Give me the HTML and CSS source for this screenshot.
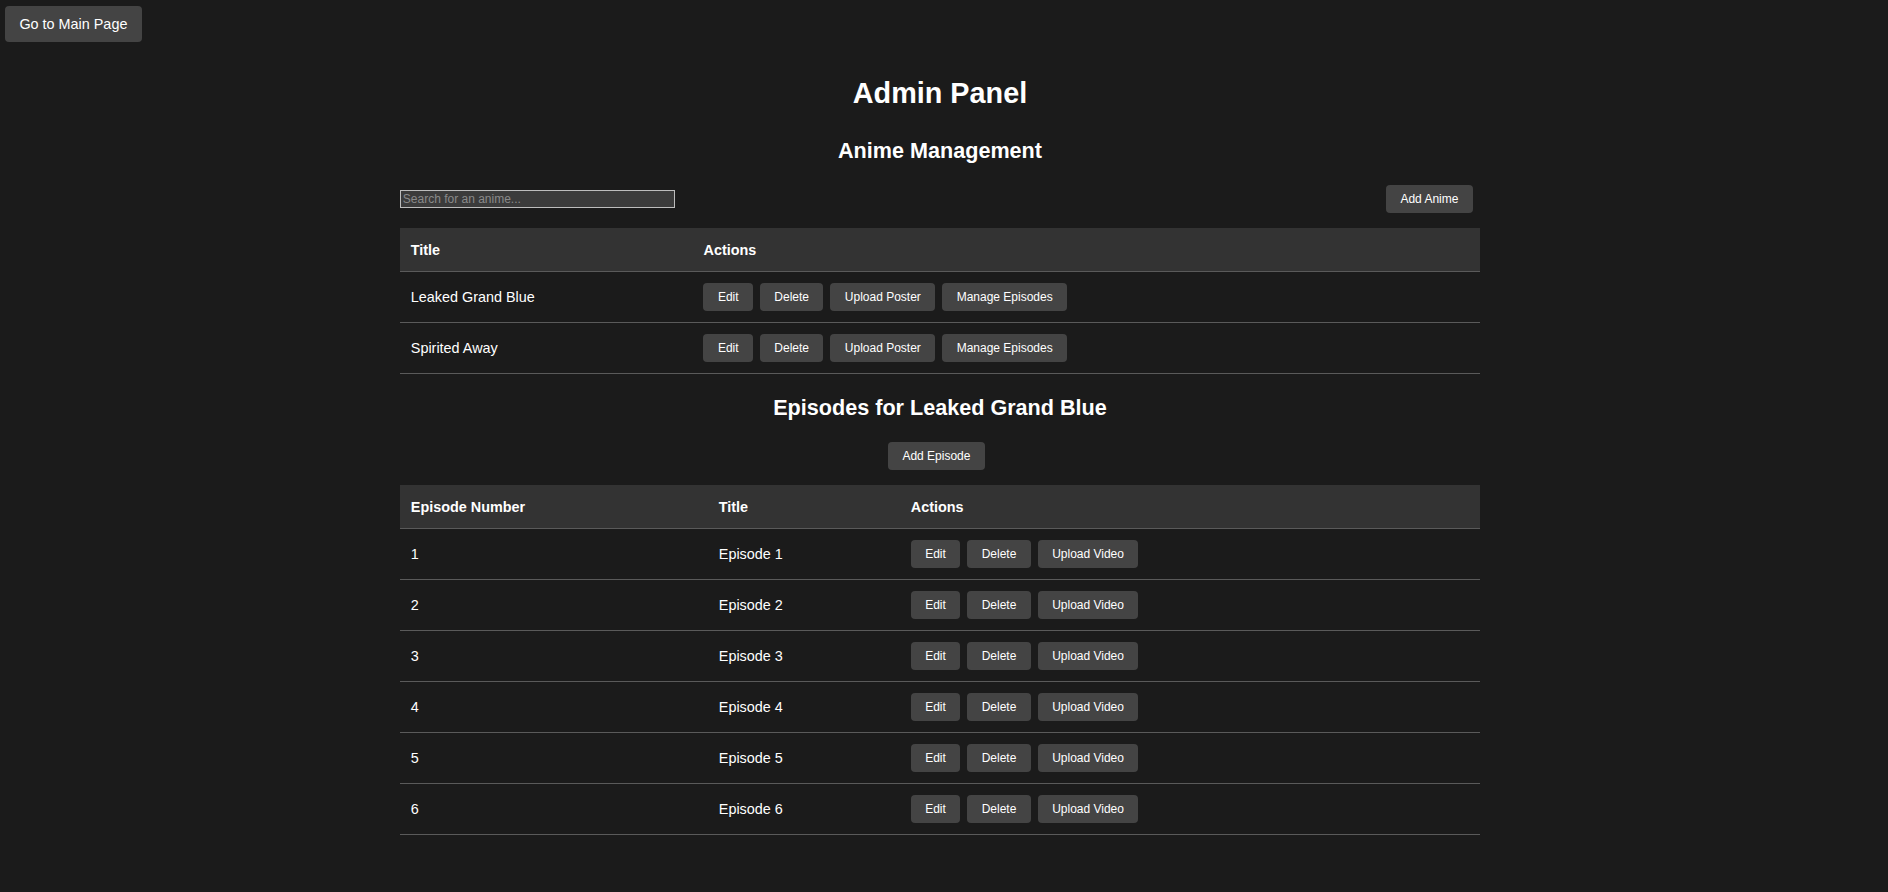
FILE: index.html
```html
<!DOCTYPE html>
<html lang="en">
<head>
<meta charset="utf-8">
<title>Admin Panel</title>
<link rel="stylesheet" href="styles.css">
</head>
<body>
<div class="topbar">
  <button class="home-btn">Go to Main Page</button>
</div>
<div class="page">
  <div class="container">
    <h1 class="title">Admin Panel</h1>
    <h2 class="section-title">Anime Management</h2>
    <div class="toolbar">
      <input class="search" type="text" placeholder="Search for an anime...">
      <button class="btn add-btn">Add Anime</button>
    </div>
    <table class="data-table">
      <thead>
        <tr><th class="col-anime-title">Title</th><th>Actions</th></tr>
      </thead>
      <tbody>
        <tr>
          <td>Leaked Grand Blue</td>
          <td><div class="actions"><button class="btn">Edit</button><button class="btn">Delete</button><button class="btn">Upload Poster</button><button class="btn">Manage Episodes</button></div></td>
        </tr>
        <tr>
          <td>Spirited Away</td>
          <td><div class="actions"><button class="btn">Edit</button><button class="btn">Delete</button><button class="btn">Upload Poster</button><button class="btn">Manage Episodes</button></div></td>
        </tr>
      </tbody>
    </table>

    <h2 class="section-title episodes-title">Episodes for Leaked Grand Blue</h2>
    <div class="center-row">
      <button class="btn add-btn">Add Episode</button>
    </div>
    <table class="data-table">
      <thead>
        <tr><th class="col-ep-num">Episode Number</th><th class="col-ep-title">Title</th><th>Actions</th></tr>
      </thead>
      <tbody>
        <tr><td>1</td><td>Episode 1</td><td><div class="actions"><button class="btn">Edit</button><button class="btn">Delete</button><button class="btn">Upload Video</button></div></td></tr>
        <tr><td>2</td><td>Episode 2</td><td><div class="actions"><button class="btn">Edit</button><button class="btn">Delete</button><button class="btn">Upload Video</button></div></td></tr>
        <tr><td>3</td><td>Episode 3</td><td><div class="actions"><button class="btn">Edit</button><button class="btn">Delete</button><button class="btn">Upload Video</button></div></td></tr>
        <tr><td>4</td><td>Episode 4</td><td><div class="actions"><button class="btn">Edit</button><button class="btn">Delete</button><button class="btn">Upload Video</button></div></td></tr>
        <tr><td>5</td><td>Episode 5</td><td><div class="actions"><button class="btn">Edit</button><button class="btn">Delete</button><button class="btn">Upload Video</button></div></td></tr>
        <tr><td>6</td><td>Episode 6</td><td><div class="actions"><button class="btn">Edit</button><button class="btn">Delete</button><button class="btn">Upload Video</button></div></td></tr>
      </tbody>
    </table>
  </div>
</div>
</body>
</html>
```

FILE: styles.css
```css
html, body {
  margin: 0;
  padding: 0;
  background: #1b1b1b;
}

body {
  color: #ffffff;
  font-family: "Liberation Sans", Arial, sans-serif;
  font-size: 14.4px;
  line-height: normal;
}

.topbar {
  padding: 6px 0 0 5px;
  height: 36px;
}

.home-btn {
  display: block;
  height: 36px;
  padding: 0 14.4px;
  border: none;
  border-radius: 4px;
  background: #444444;
  color: #ffffff;
  font-family: "Liberation Sans", Arial, sans-serif;
  font-size: 14.4px;
  line-height: 16px;
  cursor: pointer;
}

.page {
  display: flex;
  justify-content: center;
  padding-right: 8px;
}

.container {
  width: 1080px;
}

.title {
  margin: 34.6px 0 0;
  font-size: 28.8px;
  font-weight: bold;
  line-height: 32px;
  text-align: center;
}

.section-title {
  margin: 30.6px 0 0;
  font-size: 21.6px;
  font-weight: bold;
  line-height: 24px;
  text-align: center;
}

.toolbar {
  display: flex;
  align-items: center;
  justify-content: space-between;
  margin-top: 21.8px;
  height: 28px;
}

.search {
  box-sizing: border-box;
  width: 275px;
  height: 18px;
  margin: 0;
  padding: 0 1.8px;
  border: 1px solid #bdbdbd;
  background: #3b3b3b;
  color: #ffffff;
  font-family: "Liberation Sans", Arial, sans-serif;
  font-size: 12px;
  outline: none;
}

.search::placeholder {
  color: #8a8a8a;
}

.btn {
  display: inline-block;
  box-sizing: border-box;
  height: 28px;
  margin: 0;
  padding: 0 14.4px;
  border: none;
  border-radius: 4px;
  background: #444444;
  color: #ffffff;
  font-family: "Liberation Sans", Arial, sans-serif;
  font-size: 12px;
  line-height: 28px;
  white-space: nowrap;
  cursor: pointer;
}

.add-btn {
  margin-right: 7.2px;
}

.data-table {
  width: 1080px;
  margin-top: 15px;
  border-collapse: collapse;
  table-layout: fixed;
}

.data-table th {
  height: 44px;
  box-sizing: border-box;
  padding: 0 10.8px;
  background: #333333;
  border-bottom: 1px solid #5a5a5a;
  font-size: 14.4px;
  font-weight: bold;
  line-height: 16px;
  text-align: left;
  vertical-align: middle;
}

.data-table td {
  height: 51px;
  box-sizing: border-box;
  padding: 0 10.8px;
  border-bottom: 1px solid #5a5a5a;
  font-size: 14.4px;
  line-height: 16px;
  text-align: left;
  vertical-align: middle;
}

.col-anime-title {
  width: 292.7px;
}

.col-ep-num {
  width: 308px;
}

.col-ep-title {
  width: 192px;
}

.actions {
  display: flex;
  gap: 7px;
  align-items: center;
}

.episodes-title {
  margin-top: 21.5px;
}

.center-row {
  display: flex;
  justify-content: center;
  margin-top: 22px;
}
```
